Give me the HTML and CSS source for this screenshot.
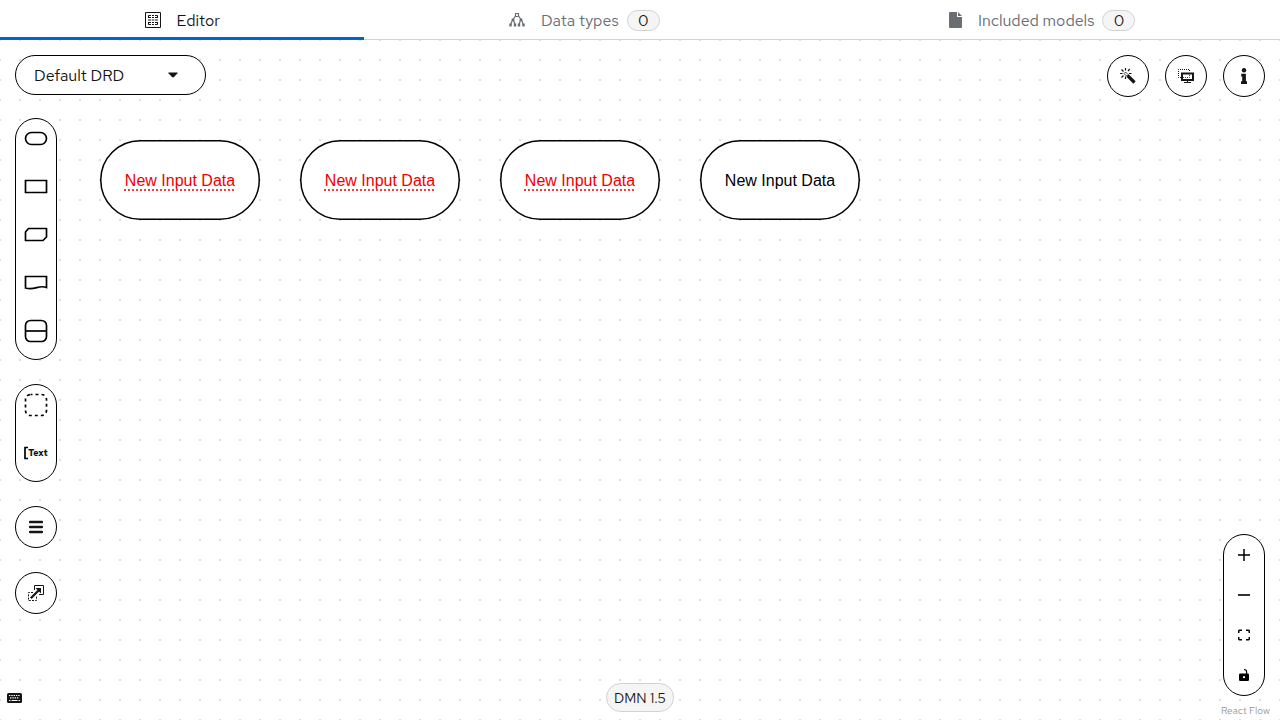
FILE: index.html
```html
<!DOCTYPE html>
<html lang="en">
<head>
<meta charset="utf-8">
<title>DMN Editor</title>
<link rel="stylesheet" href="styles.css">
</head>
<body>
<nav class="tabs" role="tablist" aria-label="Editor sections">
  <button class="tab tab-active" role="tab" aria-selected="true">
    <svg class="tab-icon" width="16" height="16" viewBox="0 0 16 16" fill="none" stroke="currentColor" aria-hidden="true"><path d="M.5.5h15v15H.5z"/><path d="M3.500 6V3.500H6M7 3.500h2M10 3.500h2.500V6M3.500 10v2.500H6M7 12.500h2M10 12.500h2.500V10M4 5.500h2M7 5.500h2M10 5.500h2M3 8h3M6.700 8h2.600M10 8h3M4 10.500h2M7 10.500h2M10 10.500h2"/></svg>
    <span class="tab-name">Editor</span>
  </button>
  <button class="tab" role="tab" aria-selected="false">
    <svg class="tab-icon" width="16" height="16" viewBox="0 0 16 16" fill="none" stroke="currentColor" stroke-width="1.200" aria-hidden="true"><path d="M6.500 1.500h3v3h-3z"/><path d="M6.500 4 4 7.500M9.500 4 12 7.500M3.500 8 1.500 13M4.500 8l1.500 5M11.500 8 10 13M12.500 8l2 5"/><path d="M2.700 6.500h2.600v2.600H2.700zM10.700 6.500h2.600v2.600h-2.600zM.3 11.500h2.400v3H.3zM4.800 11.500h2.400v3H4.800zM8.800 11.500h2.400v3H8.800zM13.300 11.500h2.400v3h-2.400z" fill="currentColor" stroke="none"/></svg>
    <span class="tab-name">Data types</span><span class="badge">0</span>
  </button>
  <button class="tab" role="tab" aria-selected="false">
    <svg class="tab-icon" width="13" height="16" viewBox="0 0 13 16" fill="currentColor" aria-hidden="true"><path d="M1 0h7v5h5v10a1 1 0 0 1-1 1H1a1 1 0 0 1-1-1V1a1 1 0 0 1 1-1zM9 0l4 4H9z"/></svg>
    <span class="tab-name">Included models</span><span class="badge">0</span>
  </button>
</nav>

<main class="canvas">
  <svg class="dots" width="100%" height="100%" aria-hidden="true">
    <defs><pattern id="grid" width="20" height="20" x="-10" y="-10" patternUnits="userSpaceOnUse"><path d="M9 9h2v2H9z" fill="#dfdfdf"/></pattern></defs>
    <rect width="100%" height="100%" fill="url(#grid)"/>
  </svg>

  <div class="node node-1 node-invalid"><svg class="node-shape" viewBox="0 0 160 80"><rect x=".75" y=".75" width="158.500" height="78.500" rx="39.250"/></svg><span class="node-label">New Input Data</span></div>
  <div class="node node-2 node-invalid"><svg class="node-shape" viewBox="0 0 160 80"><rect x=".75" y=".75" width="158.500" height="78.500" rx="39.250"/></svg><span class="node-label">New Input Data</span></div>
  <div class="node node-3 node-invalid"><svg class="node-shape" viewBox="0 0 160 80"><rect x=".75" y=".75" width="158.500" height="78.500" rx="39.250"/></svg><span class="node-label">New Input Data</span></div>
  <div class="node node-4"><svg class="node-shape" viewBox="0 0 160 80"><rect x=".75" y=".75" width="158.500" height="78.500" rx="39.250"/></svg><span class="node-label">New Input Data</span></div>

  <aside class="left-panel">
    <div class="drd-picker">
      <select class="drd-select" aria-label="DRD"><option>Default DRD</option></select>
      <svg class="drd-caret" width="10" height="6" viewBox="0 0 10 6" aria-hidden="true"><path d="M.8.500h8.400q.8 0 .3.800L6 5q-1 .9-2 0L.5 1.300Q0 .500.8.500z" fill="#151515"/></svg>
    </div>
    <div class="palette">
      <button class="tool" aria-label="Input data"><svg width="24" height="24" viewBox="0 0 24 24" fill="none" stroke="#000" stroke-width="1.700"><rect x="1.500" y="5.500" width="21" height="12" rx="6"/></svg></button>
      <button class="tool" aria-label="Decision"><svg width="24" height="24" viewBox="0 0 24 24" fill="none" stroke="#000" stroke-width="1.700"><path d="M1.500 5.500h21v12h-21z"/></svg></button>
      <button class="tool" aria-label="Business knowledge model"><svg width="24" height="24" viewBox="0 0 24 24" fill="none" stroke="#000" stroke-width="1.700"><path d="M4.500 5.500h18v8.500l-3.500 3.500h-17.500v-8.500z" stroke-linejoin="round"/></svg></button>
      <button class="tool" aria-label="Knowledge source"><svg width="24" height="24" viewBox="0 0 24 24" fill="none" stroke="#000" stroke-width="1.700"><path d="M1.500 16.500v-11h21v11c-8-3-11 3-21 .5z"/></svg></button>
      <button class="tool" aria-label="Decision service"><svg width="24" height="24" viewBox="0 0 24 24" fill="none" stroke="#000" stroke-width="1.700"><rect x="1.500" y="1.500" width="21" height="21" rx="5"/><path d="M1.500 12h21"/></svg></button>
    </div>
    <div class="palette">
      <button class="tool" aria-label="Group"><svg width="24" height="24" viewBox="0 0 24 24" fill="none" stroke="#000" stroke-width="1.700"><rect x="1.500" y="1.500" width="21" height="21" rx="5" stroke-dasharray="3 3" stroke-dashoffset="1"/></svg></button>
      <button class="tool tool-text" aria-label="Text annotation"><svg width="4" height="14" viewBox="0 0 4 14" fill="none" stroke="#000" stroke-width="1.700" aria-hidden="true"><path d="M4 1.500H1v11h3"/></svg><span>Text</span></button>
    </div>
    <button class="round" aria-label="DRG nodes"><svg width="14" height="14" viewBox="0 0 14 14" stroke="#151515" stroke-width="2.300" stroke-linecap="round"><path d="M1 2h12M1 7h12M1 12h12"/></svg></button>
    <button class="round" aria-label="External nodes"><svg width="16" height="16" viewBox="0 0 16 16" fill="none" stroke="#151515"><path d="M6.500 5V.5h9v9H11"/><path d="M5 7.500H.5v8h8V11" stroke-dasharray="2 1.200"/><path d="m2.800 13.200 8.500-8.500" stroke-width="2.200"/><path d="M7.500 3H13v5.500z" fill="#151515" stroke="none"/></svg></button>
  </aside>

  <aside class="right-panel">
    <button class="round" aria-label="Autolayout"><svg width="16" height="16" viewBox="0 0 16 16" fill="none" stroke="#151515"><path d="m7.500 7.500 7 7" stroke-width="3.200"/><path d="M5.500 0v2.500M1.500 1.500l2 2M9.800 1 8 3M0 5.500h2.500M9 5.500h2.500M1.500 9.500l2-2M5.500 8.500V11" stroke-width="1.200"/><path d="m5.500 4 2.500 2.500-1.500 1.500L4 5.500z" stroke-width=".8"/></svg></button>
    <button class="round" aria-label="Overlays"><svg width="16" height="14" viewBox="0 0 16 14" fill="none" stroke="#151515"><path d="M3 8.500H.5v-8h11V3" stroke-dasharray="1 1"/><path d="M4 4.500h11v6.500H4z" stroke-width="2"/><path d="M5 8.500h6.500V5.500" stroke-dasharray="1 1" stroke-width=".8"/><path d="M9.500 12v1.500M6 13.500h7"/></svg></button>
    <button class="round" aria-label="Properties"><svg width="6" height="16" viewBox="0 0 6 16" fill="#151515"><circle cx="3" cy="2.200" r="2.200"/><path d="M.2 5.800h4.700v7.400H6V16H0v-2.800h1.200V8.500h-1z"/></svg></button>
  </aside>

  <div class="zoom-controls">
    <button class="zoom-button" aria-label="Zoom in"><svg width="12" height="12" viewBox="0 0 12 12" stroke="#000" stroke-width="1.500"><path d="M0 6h12M6 0v12"/></svg></button>
    <button class="zoom-button" aria-label="Zoom out"><svg width="12" height="12" viewBox="0 0 12 12" stroke="#000" stroke-width="1.600"><path d="M0 6h12"/></svg></button>
    <button class="zoom-button" aria-label="Fit view"><svg width="12" height="12" viewBox="0 0 12 12" fill="none" stroke="#000" stroke-width="1.500"><path d="M.7 4V2.200q0-1 1-1H4M8 1.200h2.300q1 0 1 1V4M11.300 8v1.800q0 1-1 1H8M4 10.800H1.700q-1 0-1-1V8"/></svg></button>
    <button class="zoom-button" aria-label="Toggle interactivity"><svg width="10" height="12" viewBox="0 0 10 12"><path d="M1.200 4.500h5.800V3Q7 1.300 5 1.100v-1Q8.200.2 8.200 2.800v1.700h.6Q10 4.500 10 5.700v5q0 1.200-1.200 1.200H1.200Q0 11.900 0 10.700v-5Q0 4.500 1.200 4.500z"/><circle cx="5" cy="8.200" r="1.100" fill="#fff"/></svg></button>
  </div>

  <button class="keyboard" aria-label="Keyboard shortcuts"><svg width="15" height="10" viewBox="0 0 15 10"><rect width="15" height="10" rx="1.500" fill="#151515"/><path d="M2 2.500h11M3 4.800h9" stroke="#fff" stroke-width="1.200" stroke-dasharray="1.400 .9"/><path d="M2 7.500h1.500M4.500 7.500h6M11.500 7.500H13" stroke="#fff" stroke-width="1.200"/></svg></button>
  <div class="version">DMN 1.5</div>
  <a class="attribution" href="https://reactflow.dev">React Flow</a>
</main>
</body>
</html>
```
FILE: styles.css
```css
* { box-sizing: border-box; }

body {
  margin: 0;
  min-height: 100vh;
  display: flex;
  flex-direction: column;
  background: #fff;
  color: #151515;
  font-family: "Red Hat Text", Lato, sans-serif;
  font-size: 16px;
}

button, select {
  font: inherit;
  color: inherit;
  margin: 0;
  padding: 0;
  border: 0;
  background: none;
}

svg { display: block; flex: none; }

.tabs {
  display: flex;
  height: 40px;
  border-bottom: 1px solid #d2d2d2;
}

.tab {
  flex: 1 1 auto;
  display: flex;
  align-items: center;
  justify-content: center;
  height: 40px;
  color: #6a6e73;
}

.tab-active {
  color: #151515;
  border-bottom: 3px solid #06c;
  padding-top: 3px;
}

.tab-name {
  margin-left: 16px;
  padding-top: 1px;
}

.badge {
  margin-left: 8px;
  min-width: 33px;
  height: 21px;
  border: 1px solid #d2d2d2;
  border-radius: 30px;
  background: #f5f5f5;
  color: #151515;
  line-height: 20px;
  text-align: center;
}

.canvas {
  position: relative;
  flex: 1;
  min-height: 680px;
  overflow: hidden;
}

.dots { position: absolute; inset: 0; }

.node {
  position: absolute;
  top: 100px;
  width: 160px;
  height: 80px;
  padding-top: 2px;
  display: flex;
  align-items: center;
  justify-content: center;
  color: #000;
  font-family: "Liberation Sans", Arial, sans-serif;
}

.node-shape {
  position: absolute;
  inset: 0;
  fill: #fff;
  stroke: #000;
  stroke-width: 1.5;
}

.node-label { position: relative; }

.node-1 { left: 100px; }
.node-2 { left: 300px; }
.node-3 { left: 500px; }
.node-4 { left: 700px; }

.node-invalid { color: #f00000; }

.node-invalid .node-label {
  text-decoration: underline dotted;
  text-underline-offset: 4px;
}

.left-panel {
  position: absolute;
  left: 15px;
  top: 15px;
  display: flex;
  flex-direction: column;
  align-items: flex-start;
}

.drd-picker {
  position: relative;
  margin-bottom: 23px;
}

.drd-select {
  display: block;
  appearance: none;
  width: 191px;
  height: 40px;
  padding: 1px 18px 0;
  border: 1px solid #000;
  border-radius: 30px;
  background: #fff;
}

.drd-caret {
  position: absolute;
  right: 28px;
  top: 17px;
  pointer-events: none;
}

.palette {
  width: 42px;
  border: 1px solid #000;
  border-radius: 21px;
  background: #fff;
}

.left-panel .palette, .left-panel .round { margin-bottom: 24px; }

.tool {
  display: flex;
  align-items: center;
  justify-content: center;
  width: 100%;
  height: 40px;
  margin-bottom: 8px;
}

.tool-text {
  font-size: 9px;
  font-weight: 700;
}

.round {
  display: flex;
  align-items: center;
  justify-content: center;
  width: 42px;
  height: 42px;
  border: 1px solid #000;
  border-radius: 50%;
  background: #fff;
}

.right-panel {
  position: absolute;
  right: 15px;
  top: 15px;
  display: flex;
  gap: 16px;
}

.zoom-controls {
  position: absolute;
  right: 15px;
  bottom: 24px;
  width: 42px;
  border: 1px solid #000;
  border-radius: 21px;
  background: #fff;
}

.zoom-button {
  display: flex;
  align-items: center;
  justify-content: center;
  width: 100%;
  height: 40px;
}

.keyboard {
  position: absolute;
  left: 7px;
  bottom: 17px;
}

.version {
  position: absolute;
  left: 50%;
  bottom: 8px;
  transform: translateX(-50%);
  padding: 1px 7px 0;
  border: 1px solid #d2d2d2;
  border-radius: 30px;
  background: #f5f5f5;
  font-size: 14px;
  line-height: 26px;
  white-space: nowrap;
}

.attribution {
  position: absolute;
  right: 10px;
  bottom: 3px;
  color: #999;
  font-size: 10px;
  text-decoration: none;
}
```
